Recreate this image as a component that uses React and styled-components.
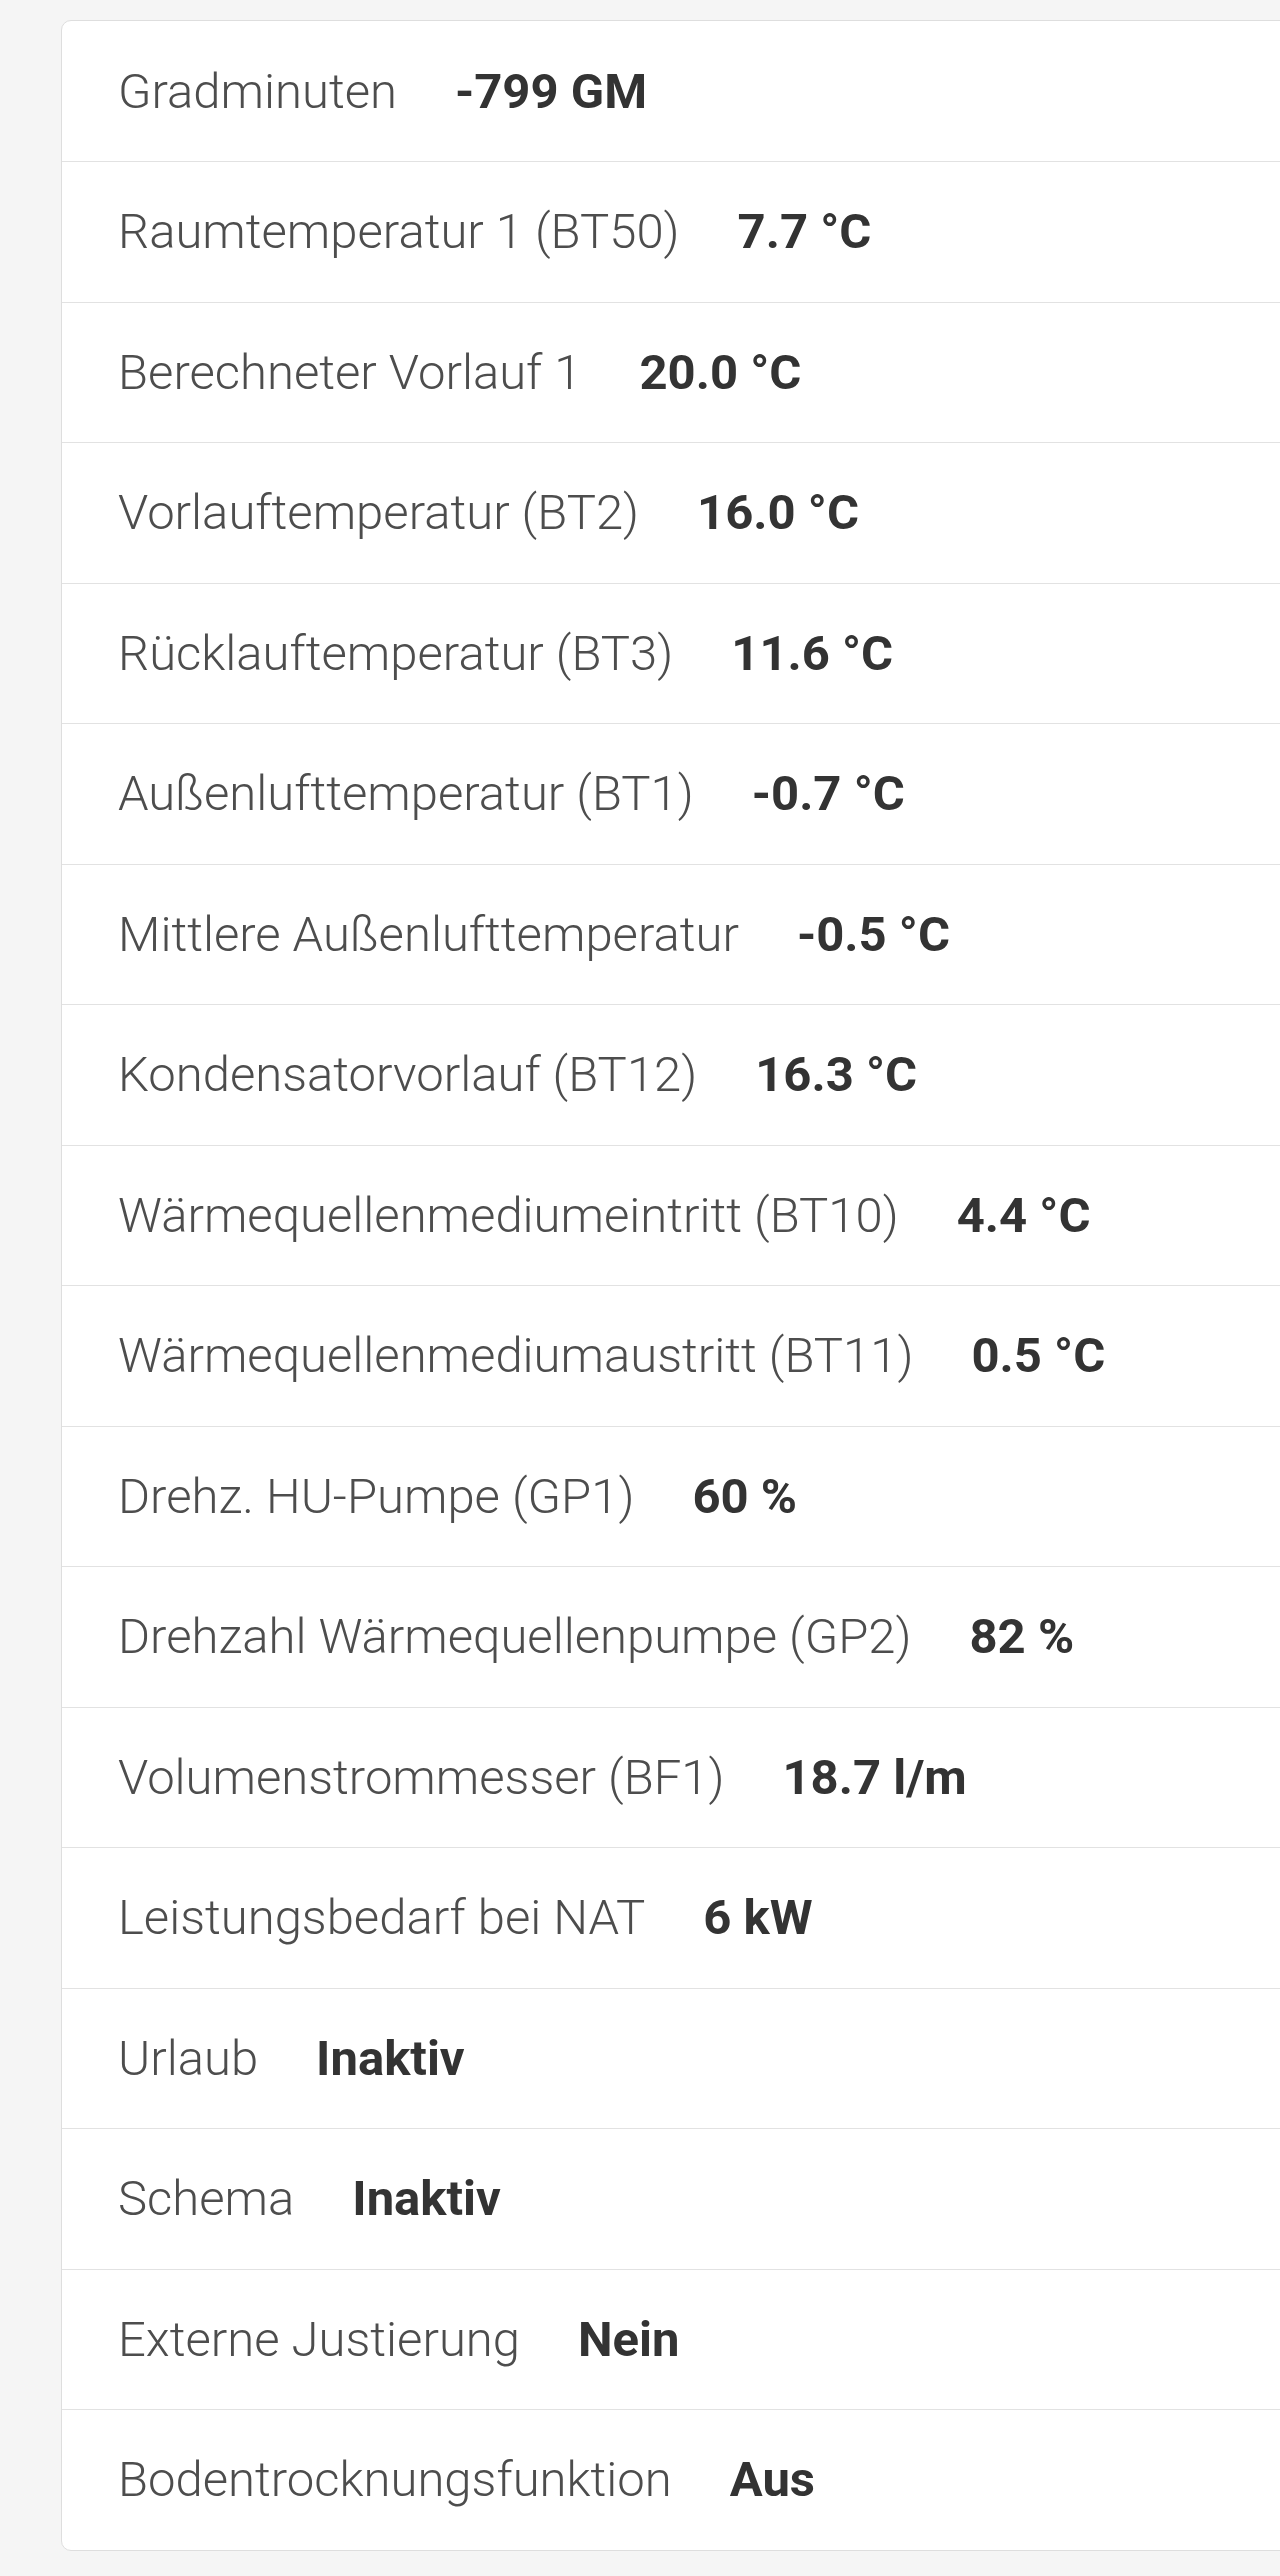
import React from "react";
import styled, { createGlobalStyle } from "styled-components";

const GlobalStyle = createGlobalStyle`
  html, body {
    margin: 0;
    padding: 0;
    background: #f5f5f5;
    overflow-x: hidden;
  }
  body {
    font-family: Roboto, "Liberation Sans", Arial, sans-serif;
  }
`;

const Page = styled.div`
  padding: 20px 0 26px 61px;
`;

const Card = styled.ul`
  list-style: none;
  margin: 0 -40px 0 0;
  padding: 0;
  background: #fff;
  border: 1px solid #dedede;
  border-radius: 10px;
  overflow: hidden;
`;

const Row = styled.li`
  display: flex;
  align-items: center;
  height: 139.5px;
  padding-left: 56px;
  border-top: 1px solid #e2e2e2;
  white-space: nowrap;

  &:first-child {
    border-top: none;
    height: 140px;
  }
`;

const Label = styled.span`
  font-size: 49px;
  font-weight: 300;
  color: #4d4d4d;
`;

const Value = styled.span`
  margin-left: 58px;
  font-size: 49px;
  font-weight: 700;
  color: #333;
`;

const rows = [
  ["Gradminuten", "-799 GM"],
  ["Raumtemperatur 1 (BT50)", "7.7 °C"],
  ["Berechneter Vorlauf 1", "20.0 °C"],
  ["Vorlauftemperatur (BT2)", "16.0 °C"],
  ["Rücklauftemperatur (BT3)", "11.6 °C"],
  ["Außenlufttemperatur (BT1)", "-0.7 °C"],
  ["Mittlere Außenlufttemperatur", "-0.5 °C"],
  ["Kondensatorvorlauf (BT12)", "16.3 °C"],
  ["Wärmequellenmediumeintritt (BT10)", "4.4 °C"],
  ["Wärmequellenmediumaustritt (BT11)", "0.5 °C"],
  ["Drehz. HU-Pumpe (GP1)", "60 %"],
  ["Drehzahl Wärmequellenpumpe (GP2)", "82 %"],
  ["Volumenstrommesser (BF1)", "18.7 l/m"],
  ["Leistungsbedarf bei NAT", "6 kW"],
  ["Urlaub", "Inaktiv"],
  ["Schema", "Inaktiv"],
  ["Externe Justierung", "Nein"],
  ["Bodentrocknungsfunktion", "Aus"],
];

const App = () => {
  return (
    <>
      <GlobalStyle />
      <Page>
        <Card>
          {rows.map(([label, value]) => (
            <Row key={label}>
              <Label>{label}</Label>
              <Value>{value}</Value>
            </Row>
          ))}
        </Card>
      </Page>
    </>
  );
};

export default App;
